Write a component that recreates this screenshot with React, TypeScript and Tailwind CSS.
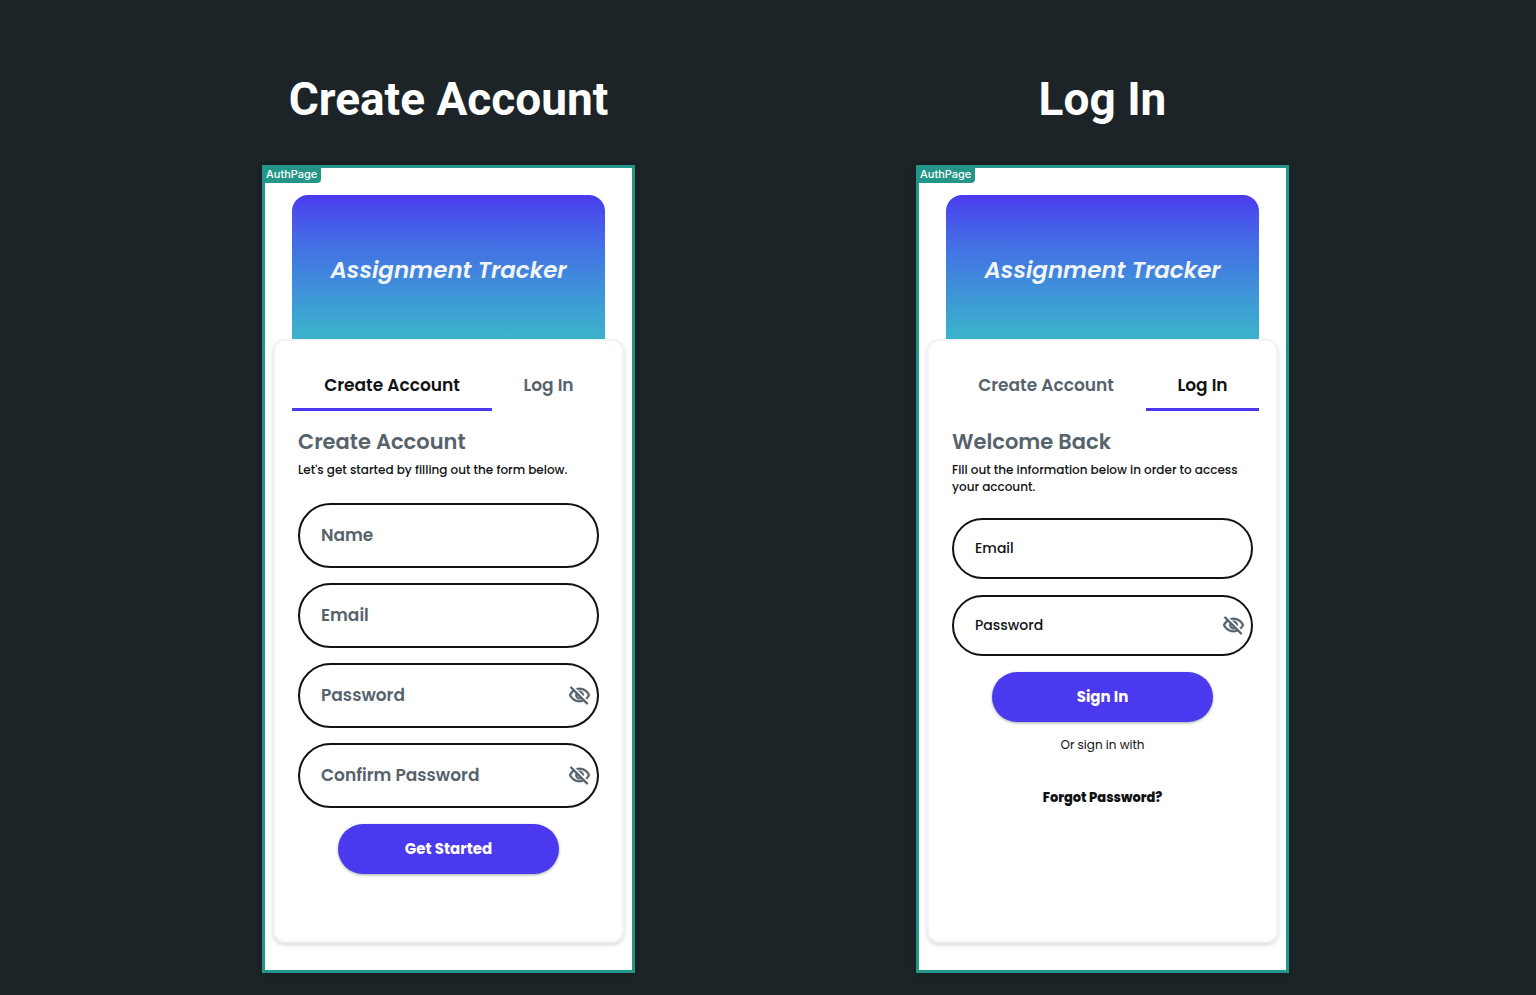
import { useState, type ReactNode } from "react";
import { MdOutlineVisibility } from "react-icons/md";

type Mode = "create" | "login";

function EyeOffIcon() {
  return (
    <svg
      viewBox="0 0 24 24"
      className="size-[23px]"
      fill="currentColor"
      stroke="currentColor"
      strokeWidth="0.4"
      aria-hidden="true"
    >
      <path d="M12 6c3.79 0 7.17 2.13 8.82 5.5-.59 1.22-1.42 2.27-2.41 3.12l1.41 1.41c1.39-1.23 2.49-2.77 3.18-4.53C21.27 7.11 17 4 12 4c-1.27 0-2.49.2-3.64.57l1.65 1.65C10.66 6.09 11.32 6 12 6zm-1.07 1.14L13 9.21c.57.25 1.03.71 1.28 1.28l2.07 2.07c.08-.34.14-.7.14-1.07C16.5 9.01 14.48 7 12 7c-.37 0-.72.05-1.07.14zM2.01 3.87l2.68 2.68C3.06 7.83 1.77 9.53 1 11.5 2.73 15.89 7 19 12 19c1.52 0 2.98-.29 4.32-.82l3.42 3.42 1.41-1.41L3.42 2.45 2.01 3.87zm7.5 7.5l2.61 2.61c-.04.01-.08.02-.12.02-1.38 0-2.5-1.12-2.5-2.5 0-.05.01-.08.01-.13zm-3.4-3.4l1.75 1.75c-.23.55-.36 1.15-.36 1.78 0 2.48 2.02 4.5 4.5 4.5.63 0 1.23-.13 1.77-.36l.98.98c-.88.24-1.8.38-2.75.38-3.79 0-7.17-2.13-8.82-5.5.7-1.43 1.72-2.61 2.93-3.53z" />
    </svg>
  );
}

function Field({ label, type = "text", large = false }: { label: string; type?: string; large?: boolean }) {
  const [shown, setShown] = useState(false);
  const secret = type === "password";
  return (
    <div
      className={`flex items-center rounded-full border-2 border-[#101213] bg-white pl-[21px] pr-[6px] ${
        large ? "h-[65px]" : "h-[61px]"
      }`}
    >
      <input
        type={secret && shown ? "text" : type}
        aria-label={label}
        placeholder={label}
        className={`min-w-0 flex-1 bg-transparent text-[#101213] outline-none placeholder:opacity-100 ${
          large
            ? "text-[17px] font-semibold placeholder:text-[#57636c]"
            : "text-[14px] font-medium placeholder:text-[#101213]"
        }`}
      />
      {secret && (
        <button
          type="button"
          aria-label={shown ? "Hide password" : "Show password"}
          onClick={() => setShown(!shown)}
          className="shrink-0 text-[#57636c]"
        >
          {shown ? <MdOutlineVisibility size={23} /> : <EyeOffIcon />}
        </button>
      )}
    </div>
  );
}

function Tab({ active, children }: { active: boolean; children: ReactNode }) {
  return (
    <button
      type="button"
      role="tab"
      aria-selected={active}
      className={`h-[50px] border-b-[3px] pt-[3px] text-[17px] font-semibold ${
        active ? "border-[#4b39ef] text-[#101213]" : "border-transparent text-[#57636c]"
      }`}
    >
      {children}
    </button>
  );
}

function PrimaryButton({ children }: { children: ReactNode }) {
  return (
    <button
      type="submit"
      className="h-[50px] w-[221px] self-center rounded-full bg-[#4b39ef] text-[15px] font-bold text-white shadow-[0_1px_3px_rgba(0,0,0,0.35)]"
    >
      {children}
    </button>
  );
}

function CreateForm() {
  return (
    <form className="flex flex-col px-[23px] pt-[19px]" onSubmit={(e) => e.preventDefault()}>
      <h2 className="text-[21px] font-semibold leading-6 text-[#57636c]">Create Account</h2>
      <p className="mt-[7px] text-[12px] font-medium leading-[17px] text-[#101213]">
        Let's get started by filling out the form below.
      </p>
      <div className="mt-[25px] flex flex-col gap-[15px]">
        <Field label="Name" large />
        <Field label="Email" type="email" large />
        <Field label="Password" type="password" large />
        <Field label="Confirm Password" type="password" large />
      </div>
      <div className="mt-4 flex justify-center">
        <PrimaryButton>Get Started</PrimaryButton>
      </div>
    </form>
  );
}

function LoginForm() {
  return (
    <form className="flex flex-col px-[23px] pt-[19px]" onSubmit={(e) => e.preventDefault()}>
      <h2 className="text-[21px] font-semibold leading-6 text-[#57636c]">Welcome Back</h2>
      <p className="mt-[7px] text-[12px] font-medium leading-[17px] text-[#101213]">
        Fill out the information below in order to access your account.
      </p>
      <div className="mt-[23px] flex flex-col gap-4">
        <Field label="Email" type="email" />
        <Field label="Password" type="password" />
        <PrimaryButton>Sign In</PrimaryButton>
      </div>
      <p className="mt-[15px] text-center text-[12px] leading-4 text-[#101213]">Or sign in with</p>
      <a href="#forgot" className="mt-[35px] self-center text-[13px] font-extrabold leading-5 text-[#101213]">
        Forgot Password?
      </a>
    </form>
  );
}

function AuthPage({ title, mode }: { title: string; mode: Mode }) {
  return (
    <section className="flex w-[373px] flex-col items-center">
      <h1 className="whitespace-nowrap font-['Roboto',sans-serif] text-[46px] font-bold leading-[54px] text-white">
        {title}
      </h1>
      <div className="relative mt-[39px] flex w-full flex-col border-[3px] border-[#249689] bg-white px-2 py-[27px] shadow-[0_0_8px_rgba(0,0,0,0.3)]">
        <span className="absolute -left-[3px] -top-[3px] rounded-br bg-[#249689] px-1 font-['Inter',sans-serif] text-[11px] font-medium leading-[18px] text-white">
          AuthPage
        </span>
        <header className="mx-[19px] flex h-36 items-center justify-center rounded-t-2xl bg-linear-to-b from-[#4b39ef] to-[#3cb4c9] pt-[6px]">
          <span className="whitespace-nowrap text-[23px] font-semibold italic text-[#f1f4f8]">
            Assignment Tracker
          </span>
        </header>
        <div className="min-h-[604px] rounded-xl border-2 border-[#f1f4f8] bg-white pt-5 shadow-[0_2px_4px_rgba(0,0,0,0.16)]">
          <div role="tablist" className="mx-[17px] grid grid-cols-[200fr_113fr]">
            <Tab active={mode === "create"}>Create Account</Tab>
            <Tab active={mode === "login"}>Log In</Tab>
          </div>
          {mode === "create" ? <CreateForm /> : <LoginForm />}
        </div>
      </div>
    </section>
  );
}

export default function App() {
  return (
    <main className="flex min-h-screen items-start justify-center gap-[281px] bg-[#1d2428] pb-[22px] pl-[15px] pt-[72px] font-['Poppins','Inter',sans-serif]">
      <AuthPage title="Create Account" mode="create" />
      <AuthPage title="Log In" mode="login" />
    </main>
  );
}
